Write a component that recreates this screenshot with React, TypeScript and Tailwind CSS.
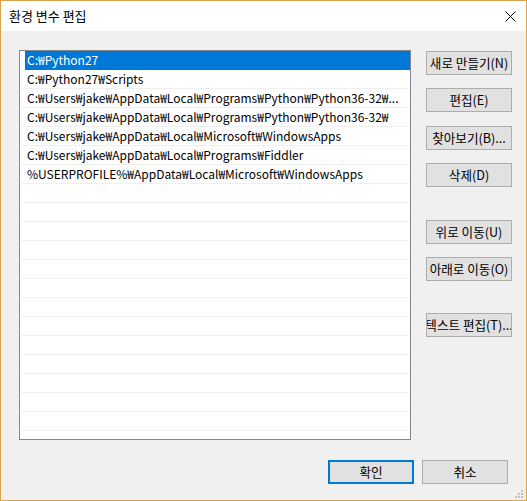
const paths = [
  "C:₩Python27",
  "C:₩Python27₩Scripts",
  "C:₩Users₩jake₩AppData₩Local₩Programs₩Python₩Python36-32₩...",
  "C:₩Users₩jake₩AppData₩Local₩Programs₩Python₩Python36-32₩",
  "C:₩Users₩jake₩AppData₩Local₩Microsoft₩WindowsApps",
  "C:₩Users₩jake₩AppData₩Local₩Programs₩Fiddler",
  "%USERPROFILE%₩AppData₩Local₩Microsoft₩WindowsApps",
]

const sideButtons = [
  { label: "새로 만들기(N)", mt: "mt-[1px]" },
  { label: "편집(E)", mt: "mt-[13px]" },
  { label: "찾아보기(B)...", mt: "mt-[14px]" },
  { label: "삭제(D)", mt: "mt-[13px]" },
  { label: "위로 이동(U)", mt: "mt-[33px]" },
  { label: "아래로 이동(O)", mt: "mt-[13px]" },
  { label: "텍스트 편집(T)...", mt: "mt-[32px]" },
]

function WinButton({ label, className = "" }: { label: string; className?: string }) {
  return (
    <div
      className={`flex h-[24px] w-[86px] items-center justify-center overflow-hidden whitespace-nowrap border border-[#adadad] bg-[#e1e1e1] text-[12.6px] text-black ${className}`}
    >
      {label}
    </div>
  )
}

export default function App() {
  const rows = Array.from({ length: 21 }, (_, i) => paths[i] ?? "")

  return (
    <div className="flex h-[501px] w-[527px] flex-col border border-[#d9a54a] bg-[#f0f0f0] font-['Noto_Sans_CJK_KR',sans-serif] text-black">
      {/* title bar */}
      <div className="flex h-[30px] items-center justify-between bg-white pl-[8px] pr-[10px]">
        <span className="text-[13px]">환경 변수 편집</span>
        <svg width="11" height="11" viewBox="0 0 11 11">
          <path d="M0.5 0.5 L10.5 10.5 M10.5 0.5 L0.5 10.5" stroke="#000" strokeWidth="1" />
        </svg>
      </div>

      <div className="relative flex flex-1 flex-col pl-[18px] pt-[19px]">
        <div className="flex">
          {/* list */}
          <div className="h-[390px] w-[392px] overflow-hidden border border-[#828790] bg-white">
            {rows.map((p, i) => (
              <div key={i} className="pl-[1px]">
                <div
                  className={
                    i === 0
                      ? "ml-[4px] h-[19px] whitespace-nowrap bg-[#0078d7] pl-[2px] text-[12px] leading-[18px] text-white"
                      : "h-[19px] overflow-hidden whitespace-nowrap border-b border-[#efefef] pl-[6px] text-[12px] leading-[18px]"
                  }
                >
                  {p}
                </div>
              </div>
            ))}
          </div>

          {/* side buttons */}
          <div className="ml-[15px] flex flex-col">
            {sideButtons.map((b) => (
              <WinButton key={b.label} label={b.label} className={b.mt} />
            ))}
          </div>
        </div>

        {/* bottom buttons */}
        <div className="mt-[20px] flex justify-end gap-[8px] pr-[18px]">
          <div className="flex h-[24px] w-[86px] items-center justify-center border-2 border-[#0078d7] bg-[#e1e1e1] text-[12.6px]">
            확인
          </div>
          <WinButton label="취소" />
        </div>

        {/* resize grip */}
        <svg className="absolute bottom-[1px] right-[2px]" width="9" height="9" viewBox="0 0 9 9">
          <rect x="6" y="0" width="2" height="2" fill="#c2c2c2" />
          <rect x="3" y="3" width="2" height="2" fill="#c2c2c2" />
          <rect x="6" y="3" width="2" height="2" fill="#c2c2c2" />
          <rect x="0" y="6" width="2" height="2" fill="#c2c2c2" />
          <rect x="3" y="6" width="2" height="2" fill="#c2c2c2" />
          <rect x="6" y="6" width="2" height="2" fill="#c2c2c2" />
        </svg>
      </div>
    </div>
  )
}
